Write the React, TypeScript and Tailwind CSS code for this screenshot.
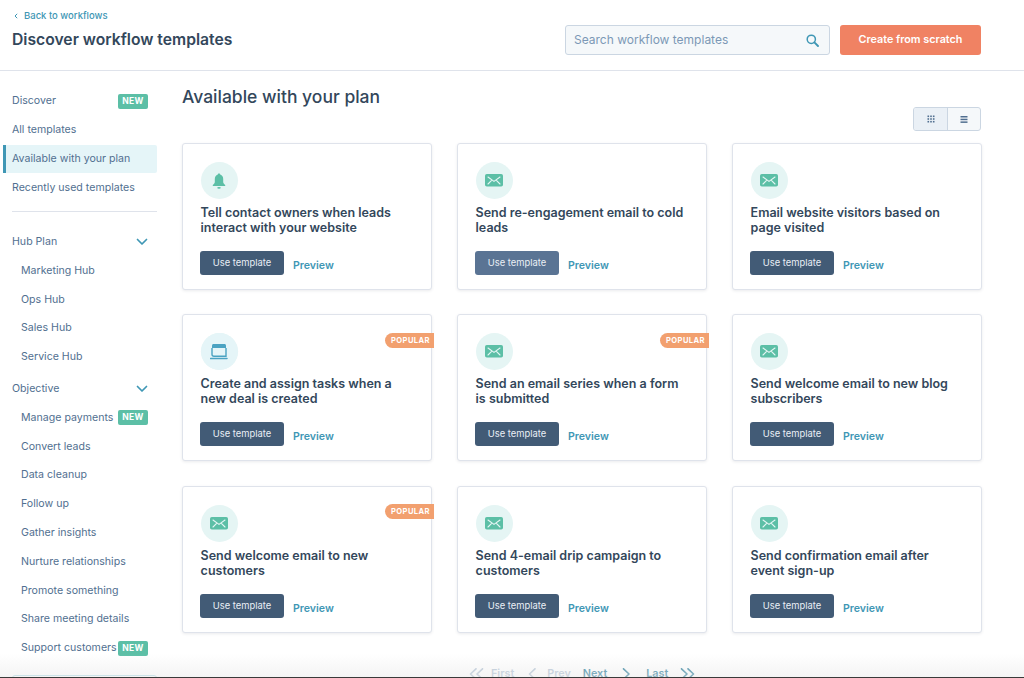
import React from "react";

const font = { fontFamily: '"Inter", "Noto Sans", sans-serif' };

function NewBadge() {
  return (
    <span className="flex h-[15px] w-[30px] shrink-0 items-center justify-center rounded-[2px] bg-[#5cbfa6] text-[8.5px] font-bold tracking-[0.4px] text-white">
      NEW
    </span>
  );
}

function Chevron() {
  return (
    <svg width="12" height="8" viewBox="0 0 12 8" fill="none" className="mr-[3px]">
      <path d="M1.5 1.5 L6 6 L10.5 1.5" stroke="#3f97b5" strokeWidth="1.7" strokeLinecap="round" strokeLinejoin="round" />
    </svg>
  );
}

function Item({ label, badge, sub }: { label: string; badge?: boolean; sub?: boolean }) {
  return (
    <div className={`flex h-[28.8px] items-center justify-between whitespace-nowrap pr-[9px] ${sub ? "pl-[21px]" : "pl-[12px]"} text-[10.6px] text-[#516f90]`}>
      <span>{label}</span>
      {badge && <NewBadge />}
    </div>
  );
}

function BellIcon() {
  return (
    <svg width="14" height="16" viewBox="0 0 14 16">
      <path d="M7 0.5 C7.8 0.5 8.2 1 8.2 1.6 C10.2 2.2 11.2 3.9 11.2 6 L11.2 9 C11.2 10.2 12 11 13.2 12 L13.2 13 L0.8 13 L0.8 12 C2 11 2.8 10.2 2.8 9 L2.8 6 C2.8 3.9 3.8 2.2 5.8 1.6 C5.8 1 6.2 0.5 7 0.5 Z" fill="#5cbfa6" />
      <ellipse cx="7" cy="14.8" rx="1.8" ry="0.9" fill="#5cbfa6" />
    </svg>
  );
}

function MailIcon() {
  return (
    <svg width="18" height="13" viewBox="0 0 18 13">
      <rect x="0" y="0" width="18" height="12.5" rx="1.8" fill="#5cbfa6" />
      <path d="M3 3 L9 7.4 L15 3 M3 10 L6.4 6.6 M15 10 L11.6 6.6" stroke="#e5f5f4" strokeWidth="1.1" fill="none" strokeLinecap="round" />
    </svg>
  );
}

function TaskIcon() {
  return (
    <svg width="18" height="16" viewBox="0 0 18 16">
      <path d="M2 1.5 C2 0.7 2.7 0 3.5 0 L14.5 0 C15.3 0 16 0.7 16 1.5 L16 4 L2 4 Z" fill="#4ba3c2" />
      <path d="M2 4 L2 10.5 C2 11.6 2.9 12.2 4 12.2 L16 12.2 L16 4" stroke="#4ba3c2" strokeWidth="1.4" fill="none" />
      <path d="M0.6 14.5 L17 14.5" stroke="#4ba3c2" strokeWidth="1.5" strokeLinecap="round" />
    </svg>
  );
}

type Card = { title: string[]; icon: "bell" | "mail" | "task"; popular?: boolean; hover?: boolean };

function TemplateCard({ card }: { card: Card }) {
  return (
    <div className="relative flex flex-col rounded-[3px] border border-[#dfe3eb] bg-white pl-[17.6px] pt-[18px] shadow-[0_1px_3px_rgba(45,62,80,0.10)]">
      {card.popular && (
        <span className="absolute right-[-3px] top-[17.5px] flex h-[15px] w-[49px] items-center justify-center rounded-l-full bg-[#f2a06f] pl-[2px] text-[7.6px] font-bold tracking-[0.4px] text-white">
          POPULAR
        </span>
      )}
      <div className="flex h-[37px] w-[37px] items-center justify-center rounded-full bg-[#e5f5f4]">
        {card.icon === "bell" && <BellIcon />}
        {card.icon === "mail" && <MailIcon />}
        {card.icon === "task" && (
          <span className="flex h-[37px] w-[37px] items-center justify-center rounded-full bg-[#e5f5f8]">
            <TaskIcon />
          </span>
        )}
      </div>
      <div className="mt-[6px] whitespace-nowrap text-[12.5px] font-semibold leading-[15px] text-[#33475b]">
        {card.title.map((l) => (
          <div key={l}>{l}</div>
        ))}
      </div>
      <div className="ml-[-0.6px] mt-[16px] flex items-center">
        <span className={`flex h-[24px] w-[84px] items-center justify-center rounded-[3px] text-[9.4px] text-[#eaf0f6] ${card.hover ? "bg-[#5a7494]" : "bg-[#425b76]"}`}>
          Use template
        </span>
        <span className="ml-[9px] mt-[6px] text-[10.6px] font-semibold text-[#3f97b5]">Preview</span>
      </div>
    </div>
  );
}

const cards: Card[] = [
  { title: ["Tell contact owners when leads", "interact with your website"], icon: "bell" },
  { title: ["Send re-engagement email to cold", "leads"], icon: "mail", hover: true },
  { title: ["Email website visitors based on", "page visited"], icon: "mail" },
  { title: ["Create and assign tasks when a", "new deal is created"], icon: "task", popular: true },
  { title: ["Send an email series when a form", "is submitted"], icon: "mail", popular: true },
  { title: ["Send welcome email to new blog", "subscribers"], icon: "mail" },
  { title: ["Send welcome email to new", "customers"], icon: "mail", popular: true },
  { title: ["Send 4-email drip campaign to", "customers"], icon: "mail" },
  { title: ["Send confirmation email after", "event sign-up"], icon: "mail" },
];

function Dbl({ color, dir }: { color: string; dir: "l" | "r" }) {
  return (
    <svg width="15" height="12" viewBox="0 0 15 12" fill="none">
      <path
        d={dir === "l" ? "M7 0.8 L1.5 6 L7 11.2 M13.5 0.8 L8 6 L13.5 11.2" : "M1.5 0.8 L7 6 L1.5 11.2 M8 0.8 L13.5 6 L8 11.2"}
        stroke={color}
        strokeWidth="1.6"
        strokeLinecap="round"
        strokeLinejoin="round"
      />
    </svg>
  );
}

function Sgl({ color, dir }: { color: string; dir: "l" | "r" }) {
  return (
    <svg width="8" height="12" viewBox="0 0 8 12" fill="none">
      <path d={dir === "l" ? "M7 0.8 L1.5 6 L7 11.2" : "M1.5 0.8 L7 6 L1.5 11.2"} stroke={color} strokeWidth="1.6" strokeLinecap="round" strokeLinejoin="round" />
    </svg>
  );
}

export default function App() {
  return (
    <div style={font} className="relative h-[678px] w-[1024px] overflow-hidden bg-white">
      <header className="flex h-[71px] items-start border-b border-[#dfe3eb] pr-[43px]">
        <div className="pl-[12px] pt-[10px]">
          <div className="flex h-[12px] items-center text-[9.5px] font-medium text-[#3f97b5]">
            <svg width="4" height="6" viewBox="0 0 4 6" fill="none" className="ml-[2px] mr-[6px]">
              <path d="M3.2 0.8 L1 3 L3.2 5.2" stroke="#3f97b5" strokeWidth="1" />
            </svg>
            Back to workflows
          </div>
          <h1 className="mt-[6px] text-[15.7px] font-semibold leading-[24px] text-[#33475b]">Discover workflow templates</h1>
        </div>
        <div className="ml-auto mt-[25px] flex items-center">
          <div className="flex h-[30px] w-[265px] items-center justify-between rounded-[3px] border border-[#cbd6e2] bg-[#f5f8fa] pl-[8px] pr-[10px] text-[12px] text-[#7c98b6]">
            <span>Search workflow templates</span>
            <svg width="13" height="13" viewBox="0 0 13 13" fill="none">
              <circle cx="5.3" cy="5.3" r="4.1" stroke="#3f97b5" strokeWidth="1.5" />
              <path d="M8.4 8.4 L12 12" stroke="#3f97b5" strokeWidth="1.9" strokeLinecap="round" />
            </svg>
          </div>
          <div className="ml-[10px] flex h-[30px] w-[141px] items-center justify-center rounded-[3px] bg-[#f08263] text-[10.8px] font-semibold text-white">
            Create from scratch
          </div>
        </div>
      </header>

      <div className="flex">
        <aside className="w-[157px] shrink-0 pt-[16px]">
          <Item label="Discover" badge />
          <Item label="All templates" />
          <div className="ml-[3px] flex h-[28.8px] items-center rounded-r-[2px] border-l-[3px] border-[#3f97b5] bg-[#e5f5f8] pl-[6px] text-[10.6px] text-[#516f90]">
            Available with your plan
          </div>
          <Item label="Recently used templates" />
          <div className="ml-[12px] mt-[9px] h-px bg-[#dfe3eb]" />
          <div className="mt-[15.4px] flex h-[28.8px] items-center justify-between pl-[12px] pr-[6px] text-[10.6px] text-[#516f90]">
            Hub Plan
            <Chevron />
          </div>
          <Item label="Marketing Hub" sub />
          <Item label="Ops Hub" sub />
          <Item label="Sales Hub" sub />
          <Item label="Service Hub" sub />
          <div className="mt-[3px] flex h-[28.8px] items-center justify-between pl-[12px] pr-[6px] text-[10.6px] text-[#516f90]">
            Objective
            <Chevron />
          </div>
          <Item label="Manage payments" sub badge />
          <Item label="Convert leads" sub />
          <Item label="Data cleanup" sub />
          <Item label="Follow up" sub />
          <Item label="Gather insights" sub />
          <Item label="Nurture relationships" sub />
          <Item label="Promote something" sub />
          <Item label="Share meeting details" sub />
          <Item label="Support customers" sub badge />
          <div className="ml-[12px] mt-[12px] h-[20px] rounded-[3px] border border-[#b5e0e8] bg-white" />
        </aside>

        <main className="ml-[25px] w-[799px]">
          <h2 className="mt-[13px] text-[17.5px] font-medium leading-[26px] text-[#33475b]">Available with your plan</h2>
          <div className="mt-[-3px] flex w-[799px] justify-end">
            <div className="flex h-[24px] w-[68px] overflow-hidden rounded-[3px] border border-[#cbd6e2] bg-[#f5f8fa]">
              <span className="flex w-[34px] items-center justify-center border-r border-[#cbd6e2] bg-[#eaf0f6]">
                <svg width="8" height="8" viewBox="0 0 8 8" fill="#516f90">
                  {[0.5, 3.2, 5.9].map((y) =>
                    [0.5, 3.2, 5.9].map((x) => <rect key={`${x}-${y}`} x={x} y={y} width="1.6" height="1.6" />)
                  )}
                </svg>
              </span>
              <span className="flex flex-1 items-center justify-center">
                <svg width="8" height="7" viewBox="0 0 8 7" fill="#516f90">
                  <rect x="0.5" y="0" width="7" height="1.5" />
                  <rect x="0.5" y="2.7" width="7" height="1.5" />
                  <rect x="0.5" y="5.4" width="7" height="1.5" />
                </svg>
              </span>
            </div>
          </div>
          <div className="mt-[12px] grid grid-cols-[250px_250px_250px] grid-rows-[147px_147px_147px] gap-x-[25px] gap-y-[24.4px]">
            {cards.map((c) => (
              <TemplateCard key={c.title[0]} card={c} />
            ))}
          </div>
          <div className="mt-[34px] flex h-[14px] items-center pl-[287px] text-[10.8px] font-semibold">
            <Dbl color="#b9c8d8" dir="l" />
            <span className="ml-[7px] text-[#b9c8d8]">First</span>
            <span className="ml-[14px]"><Sgl color="#b9c8d8" dir="l" /></span>
            <span className="ml-[11px] text-[#b9c8d8]">Prev</span>
            <span className="ml-[12px] text-[#3a87a3]">Next</span>
            <span className="ml-[15px]"><Sgl color="#3a87a3" dir="r" /></span>
            <span className="ml-[16px] text-[#3a87a3]">Last</span>
            <span className="ml-[12px]"><Dbl color="#3a87a3" dir="r" /></span>
          </div>
        </main>
      </div>

      <div className="pointer-events-none absolute bottom-0 left-0 h-[24px] w-full bg-gradient-to-b from-transparent to-[#e8e8e8]/50" />
      <div className="absolute bottom-0 left-0 h-px w-full bg-[#3a3a3a]" />
    </div>
  );
}
